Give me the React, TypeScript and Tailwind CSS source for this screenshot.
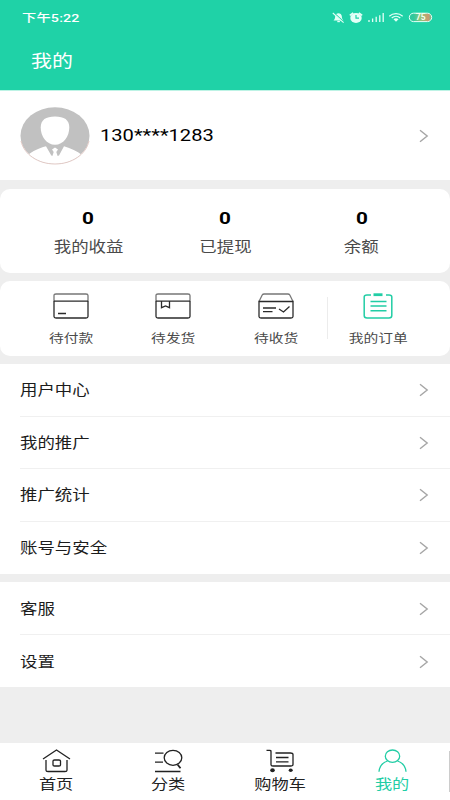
import type { ReactNode } from 'react';

type TextProps = {
  children: ReactNode,
  className?: string
}

// every label is drawn wider than its natural glyph width
const Text = ({ children, className = 'origin-center' }: TextProps) => (
  <span className={`inline-block whitespace-nowrap scale-x-[1.219] ${className}`}>{children}</span>
)

const Chevron = () => (
  <svg width="10" height="14" viewBox="0 0 10 14" fill="none" stroke="#a6a6a6" strokeWidth="1.4">
    <path d="M1 1.2 8.2 7 1 12.8" />
  </svg>
)

const StatusIcons = () => (
  <svg width="102" height="16" viewBox="331 10 102 16" fill="none" stroke="#e4fff7">
    <path d="M333.500 20.500c1.500-1.300 1.500-2.500 1.700-4.200.2-2 1.600-3 3.300-3s3.100 1 3.300 3c.2 1.700.2 2.900 1.700 4.200z" fill="#e4fff7" stroke="none" />
    <path d="M337.300 21.500h2.600" strokeWidth="1.400" />
    <path d="M334.200 13.200l10 9" stroke="#1fd2a7" strokeWidth="1.200" />
    <path d="M332.800 13l10.800 9.700" strokeWidth="1.100" />
    <ellipse cx="356" cy="18" rx="5.700" ry="5" fill="#e4fff7" stroke="none" />
    <path d="M349.800 15.400l3.400-2.600M362.200 15.400l-3.400-2.600" strokeWidth="1.600" />
    <path d="M356 15v3.200h3" stroke="#1fd2a7" strokeWidth="1.200" />
    <path d="M369 20v2M372.600 18.500V22M376.200 16.800V22M379.800 15.200V22M383.200 13v9" strokeWidth="1.300" />
    <path d="M389.300 16.200c3.800-3.500 9.600-3.500 13.400 0M391.700 18c2.500-2.200 6.100-2.200 8.600 0" strokeWidth="1.200" />
    <path d="M393.500 19.300c1.500-1.300 3.500-1.300 5 0L396 21.700z" fill="#e4fff7" stroke="none" />
    <defs>
      <linearGradient id="charge" x1="0" x2="1">
        <stop offset="0.2" stopColor="#2fc99d" />
        <stop offset="0.5" stopColor="#8fc47a" />
        <stop offset="0.85" stopColor="#c99a70" />
        <stop offset="1" stopColor="#6fbf90" />
      </linearGradient>
    </defs>
    <rect x="409.300" y="13.200" width="22.400" height="8.400" rx="4.200" fill="url(#charge)" strokeWidth="1" />
    <text x="420.700" y="20.400" fill="#f4fff2" stroke="none" fontSize="8.500" fontWeight="700" textAnchor="middle" fontFamily="Roboto, sans-serif">75</text>
  </svg>
)

const Avatar = () => (
  <svg width="70" height="58" viewBox="0 0 70 58">
    <defs>
      <clipPath id="face">
        <ellipse cx="35" cy="28.700" rx="34.500" ry="28.400" />
      </clipPath>
    </defs>
    <g clipPath="url(#face)">
      <rect width="70" height="58" fill="#c1c1c1" />
      <path d="M35 9.500c9.200 0 14.300 3.300 14.300 11 0 9-6 17.300-14.300 17.300S20.700 29.500 20.700 20.500c0-7.700 5.100-11 14.300-11z" fill="#fff" />
      <path d="M8 48c5-4 10-6.500 18-8.800L31.300 48.500 32.500 49h5L39 48.500 44 39.200C51 41.200 57 44 62 48v10H8z" fill="#fff" />
      <path d="M35 40.500l3 2-1.700 2.500 1.500 4.500h-5.600l1.500-4.500L32 42.500z" fill="#fff" />
    </g>
    <path d="M1 34C4 47.500 18 57 35 57s31-9.500 34-23" fill="none" stroke="#dfc4bf" strokeWidth="0.900" />
  </svg>
)

const stats = [
  { label: '我的收益', value: 0 },
  { label: '已提现', value: 0 },
  { label: '余额', value: 0 },
]

const orders = [
  {
    label: '待付款',
    icon: (
      <>
        <path d="M1 8.200V2.500Q1 1 3 1h30q2 0 2 1.500v5.700" stroke="#777" />
        <path d="M1 8v15.500Q1 25 3 25h30q2 0 2-1.500V8M1 8.200h34M5 20.500h8" />
      </>
    ),
  },
  {
    label: '待发货',
    icon: (
      <>
        <path d="M1 8.200V2.500Q1 1 3 1h30q2 0 2 1.500v5.700" stroke="#777" />
        <path d="M1 8v15.500Q1 25 3 25h30q2 0 2-1.500V8M1 8.200h34M6.500 8.500v6.200l4-1.700 4 1.700V8.500" />
      </>
    ),
  },
  {
    label: '待收货',
    icon: (
      <>
        <path d="M1 8.500 4.200 2Q4.800 1 6.200 1h23.600q1.400 0 2 1L35 8.500" stroke="#777" />
        <path d="M1 8.500v15Q1 25 3 25h30q2 0 2-1.500v-15zM5 15h13M5 18.700h9.500M21 16l4.500 3 6-5.500" />
      </>
    ),
  },
]

const menuGroups = [
  ['用户中心', '我的推广', '推广统计', '账号与安全'],
  ['客服', '设置'],
]

const tabs = [
  {
    label: '首页',
    icon: <path d="M1 10 14.500 1 28 10M4 11v10.200Q4 22.500 6 22.500h17q2 0 2-1.300V11M12.500 11h4.500q1.500 0 1.500 1v4q0 1-1.500 1h-4.500q-1.500 0-1.500-1v-4q0-1 1.500-1z" />,
  },
  {
    label: '分类',
    icon: (
      <>
        <ellipse cx="19" cy="8.800" rx="8.800" ry="7.500" />
        <path d="M1 4.200h8.500M1 13.200h8M1 22.500h25.500" />
        <path d="M23.500 15.500l3 3.700" strokeWidth="1.800" />
      </>
    ),
  },
  {
    label: '购物车',
    icon: (
      <>
        <path d="M0.500 1.300h3.200q1.300 0 1.300 1.200v13.300Q5 17 7 17h17.500q2.500 0 2.500-1.500V5.500Q27 4 24.500 4h-15M10 8.500h12.500M10 12.800h12.500" />
        <ellipse cx="6.500" cy="21.300" rx="2.300" ry="2" fill="currentColor" stroke="none" />
        <ellipse cx="24.700" cy="21.300" rx="2" ry="1.800" fill="currentColor" stroke="none" />
      </>
    ),
  },
  {
    label: '我的',
    active: true,
    icon: (
      <>
        <ellipse cx="14.500" cy="7.200" rx="7.200" ry="6.200" />
        <path d="M1 22.800C1.500 17 5 13.500 9.500 12M28 22.800C27.500 17 24 13.500 19.500 12" />
      </>
    ),
  },
]

const App = () => {
  return (
    <div className="flex h-[800px] w-[450px] flex-col overflow-hidden bg-[#eeeeee] font-['Roboto','Noto_Sans_CJK_SC',sans-serif] text-[#1c1c1c]">
      <header className="h-[91px] shrink-0 border-b border-[#bdf3e5] bg-[#1fd2a7] text-white">
        <div className="flex h-[35px] items-center justify-between pl-[22px] pr-[17px]">
          <Text className="origin-left text-[11.7px] font-medium leading-4 tracking-[0.15px]">下午5:22</Text>
          <StatusIcons />
        </div>
        <h1 className="flex h-[52px] items-center pl-[31px] text-[17.2px] leading-6">
          <Text className="origin-left">我的</Text>
        </h1>
      </header>

      <section className="flex h-[89px] shrink-0 items-center bg-white pl-5 pr-[21px]">
        <Avatar />
        <p className="ml-2.5 flex-1 pt-px text-[16.5px] leading-6 text-black">
          <Text className="origin-left">130****1283</Text>
        </p>
        <Chevron />
      </section>

      <section className="mt-[9px] flex h-[84px] shrink-0 rounded-[10px] bg-white px-5 pt-[17px]">
        {stats.map((stat) => (
          <div key={stat.label} className="flex flex-1 flex-col items-center">
            <Text className="text-[17px] font-bold leading-6 text-black">{stat.value}</Text>
            <Text className="mt-[6px] text-[14.3px] leading-[22px] text-[#4a4a4a]">{stat.label}</Text>
          </div>
        ))}
      </section>

      <section className="mt-2 flex h-[74.5px] shrink-0 rounded-[10px] bg-white pl-5 text-[12.1px] leading-5 text-[#4a4a4a]">
        {orders.map((order) => (
          <div key={order.label} className="flex w-[102.3px] flex-col items-center pt-3">
            <svg width="36" height="26" viewBox="0 0 36 26" fill="none" stroke="#2b2b2b" strokeWidth="1.300">{order.icon}</svg>
            <Text className="mt-[10px]">{order.label}</Text>
          </div>
        ))}
        <div className="mt-4 h-[42px] w-px bg-[#ececec]" />
        <div className="flex w-[101px] flex-col items-center pt-3">
          <svg width="30" height="26" viewBox="0 0 30 26" fill="none" stroke="#22cda5" strokeWidth="1.500">
            <path d="M8 2H4Q1.200 2 1.200 4v18.500Q1.200 25 4 25h22q2.800 0 2.800-2.500V4Q28.800 2 26 2h-3M7.500 8.500h16M7.500 13h16M7.500 17.700h16" />
            <path d="M10.500 1.700h9" strokeWidth="2.800" />
          </svg>
          <Text className="mt-[10px]">我的订单</Text>
        </div>
      </section>

      {menuGroups.map((group) => (
        <ul key={group[0]} className="mt-[8.5px] shrink-0 bg-white pl-5">
          {group.map((item) => (
            <li key={item} className="flex h-[52.6px] items-center justify-between border-b border-[#f0f0f0] pr-[21px] pt-px text-[14.3px] leading-6 last:h-[52.2px] last:border-b-0">
              <Text className="origin-left">{item}</Text>
              <Chevron />
            </li>
          ))}
        </ul>
      ))}

      <nav className="mt-auto flex h-[57px] shrink-0 bg-white">
        {tabs.map((tab) => (
          <div key={tab.label} className={`flex flex-1 flex-col items-center pt-[6px] ${tab.active ? 'text-[#22cda5]' : 'text-[#222222]'}`}>
            <svg width="29" height="24" viewBox="0 0 29 24" fill="none" stroke="currentColor" strokeWidth="1.300">{tab.icon}</svg>
            <Text className="text-[14.1px] leading-[22px]">{tab.label}</Text>
          </div>
        ))}
        <div className="ml-px mt-2 h-[41px] w-px bg-[#cccccc]" />
      </nav>
    </div>
  )
}

export default App;
